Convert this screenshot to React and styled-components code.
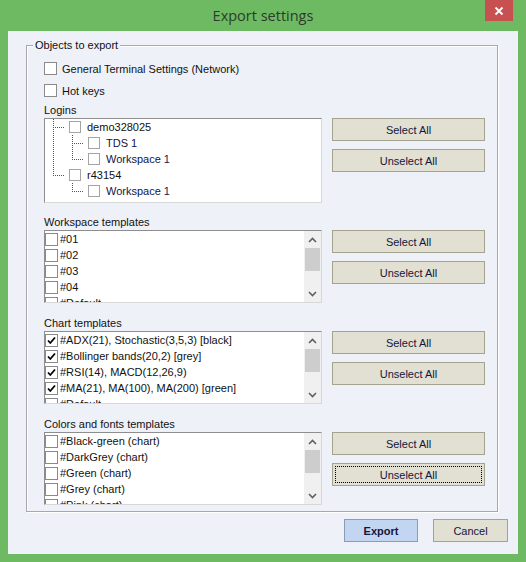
import React from 'react';
import styled, { createGlobalStyle } from 'styled-components';

const GlobalStyle = createGlobalStyle`
  html, body {
    margin: 0;
    padding: 0;
    background: #6dba62;
  }
  body {
    font-family: "Liberation Sans", Arial, sans-serif;
    font-size: 11px;
    color: #111;
  }
`;

const Window = styled.div`
  width: 526px;
  height: 562px;
  background: #6dba62;
  display: flex;
  flex-direction: column;
  box-sizing: border-box;
`;

const TitleBar = styled.div`
  height: 31px;
  position: relative;
  display: flex;
  align-items: center;
  justify-content: center;
`;

const Title = styled.div`
  font-family: "Open Sans", "Noto Sans", sans-serif;
  font-size: 14.5px;
  color: #2e3a2c;
  margin-top: -1px;
`;

const CloseButton = styled.div`
  position: absolute;
  top: 0;
  right: 13px;
  width: 28px;
  height: 21px;
  background: #c75050;
  display: flex;
  align-items: center;
  justify-content: center;
`;

const Client = styled.div`
  margin: 0 8px;
  height: 523px;
  background: #eff1f9;
  display: flex;
  flex-direction: column;
`;

const Group = styled.div`
  position: relative;
  margin: 14px 20px 0 18px;
  height: 467px;
  box-sizing: border-box;
  border: 1px solid #a8a8a8;
  box-shadow: inset 1px 1px 0 #fff, 1px 1px 0 #fff;
  padding: 15px 0 0 17px;
  display: flex;
  flex-direction: column;
`;

const Legend = styled.div`
  position: absolute;
  top: -8px;
  left: 6px;
  padding: 0 2px;
  background: #eff1f9;
  line-height: 14px;
`;

const CheckRow = styled.label`
  display: flex;
  align-items: center;
  height: 13px;
  margin-top: ${(p) => p.$top}px;
  gap: 5px;
`;

const Box = styled.span`
  width: ${(p) => p.$size}px;
  height: ${(p) => p.$size}px;
  box-sizing: border-box;
  border: 1px solid ${(p) => (p.$light ? '#a4a4a4' : '#8a8a8a')};
  background: #fff;
  flex-shrink: 0;
  display: flex;
  align-items: center;
  justify-content: center;
`;

const Section = styled.div`
  margin-top: ${(p) => p.$top}px;
  display: flex;
  flex-direction: column;
`;

const SectionLabel = styled.div`
  line-height: 14px;
  margin-bottom: 1px;
`;

const SectionBody = styled.div`
  display: flex;
  align-items: flex-start;
`;

const ListBox = styled.div`
  position: relative;
  width: 278px;
  height: ${(p) => p.$height}px;
  box-sizing: border-box;
  border: 1px solid #8e8e8e;
  border-right-color: #d8d8d8;
  border-bottom-color: #d8d8d8;
  background: #fff;
  overflow: hidden;
  display: flex;
`;

const Items = styled.div`
  flex: 1;
  display: flex;
  flex-direction: column;
`;

const Item = styled.div`
  height: 16px;
  flex-shrink: 0;
  display: flex;
  align-items: center;
  gap: 2px;
  white-space: nowrap;
`;

const ScrollBar = styled.div`
  width: 17px;
  background: #f0f0f0;
  display: flex;
  flex-direction: column;
  align-items: center;
`;

const Arrow = styled.div`
  height: 17px;
  display: flex;
  align-items: center;
  justify-content: center;
`;

const Thumb = styled.div`
  width: 15px;
  height: 23px;
  background: #cdcdcd;
`;

const Spacer = styled.div`
  flex: 1;
`;

const TreeRow = styled.div`
  height: 16px;
  flex-shrink: 0;
  display: flex;
  align-items: center;
  padding-left: ${(p) => 24 + p.$level * 19}px;
  gap: 6px;
  color: ${(p) => (p.$level ? '#14144a' : '#111')};
`;

const TreeLines = styled.svg`
  position: absolute;
  left: 0;
  top: 0;
`;

const Buttons = styled.div`
  margin-left: 10px;
  display: flex;
  flex-direction: column;
  gap: 8px;
`;

const Button = styled.div`
  width: ${(p) => p.$width || 153}px;
  height: 23px;
  box-sizing: border-box;
  border: 1px solid ${(p) => (p.$primary ? '#8d9bb4' : '#a4a38f')};
  background: ${(p) => (p.$primary ? '#c3d6f1' : '#e1e0d3')};
  font-weight: ${(p) => (p.$primary ? 'bold' : 'normal')};
  color: #15153a;
  display: flex;
  align-items: center;
  justify-content: center;
  outline: ${(p) => (p.$focus ? '1px dotted #000' : 'none')};
  outline-offset: -4px;
`;

const Footer = styled.div`
  display: flex;
  justify-content: flex-end;
  gap: 15px;
  padding: 7px 10px 0 0;
`;

function Check({ checked, size = 13, light }) {
  return (
    <Box $size={size} $light={light}>
      {checked && (
        <svg width="9" height="9" viewBox="0 0 9 9">
          <path d="M1 4.5 L3.3 7 L8 1.5" fill="none" stroke="#000" strokeWidth="1.8" />
        </svg>
      )}
    </Box>
  );
}

function Chevron({ up }) {
  return (
    <svg width="9" height="6" viewBox="0 0 9 6">
      <path
        d={up ? 'M1 5 L4.5 1.5 L8 5' : 'M1 1 L4.5 4.5 L8 1'}
        fill="none"
        stroke="#606060"
        strokeWidth="1.6"
      />
    </svg>
  );
}

function TemplateList({ items }) {
  return (
    <ListBox $height={73}>
      <Items>
        {items.map((it) => (
          <Item key={it.label}>
            <Check checked={it.checked} />
            {it.label}
          </Item>
        ))}
      </Items>
      <ScrollBar>
        <Arrow>
          <Chevron up />
        </Arrow>
        <Thumb />
        <Spacer />
        <Arrow>
          <Chevron />
        </Arrow>
      </ScrollBar>
    </ListBox>
  );
}

function SelectButtons({ focus }) {
  return (
    <Buttons>
      <Button>Select All</Button>
      <Button $focus={focus}>Unselect All</Button>
    </Buttons>
  );
}

const logins = [
  { label: 'demo328025', level: 0 },
  { label: 'TDS 1', level: 1 },
  { label: 'Workspace 1', level: 1 },
  { label: 'r43154', level: 0 },
  { label: 'Workspace 1', level: 1 },
];

const workspaces = ['#01', '#02', '#03', '#04', '#Default'].map((label) => ({ label }));

const charts = [
  '#ADX(21), Stochastic(3,5,3) [black]',
  '#Bollinger bands(20,2) [grey]',
  '#RSI(14), MACD(12,26,9)',
  '#MA(21), MA(100), MA(200) [green]',
  '#Default',
].map((label, i) => ({ label, checked: i < 4 }));

const colors = [
  '#Black-green (chart)',
  '#DarkGrey (chart)',
  '#Green (chart)',
  '#Grey (chart)',
  '#Pink (chart)',
].map((label) => ({ label }));

export default function App() {
  return (
    <>
      <GlobalStyle />
      <Window>
        <TitleBar>
          <Title>Export settings</Title>
          <CloseButton>
            <svg width="10" height="10" viewBox="0 0 10 10">
              <path d="M1.5 1.5 L8.5 8.5 M8.5 1.5 L1.5 8.5" stroke="#fff" strokeWidth="1.8" />
            </svg>
          </CloseButton>
        </TitleBar>
        <Client>
          <Group>
            <Legend>Objects to export</Legend>
            <CheckRow $top={1}>
              <Check />
              General Terminal Settings (Network)
            </CheckRow>
            <CheckRow $top={9}>
              <Check />
              Hot keys
            </CheckRow>

            <Section $top={6}>
              <SectionLabel>Logins</SectionLabel>
              <SectionBody>
                <ListBox $height={85}>
                  <TreeLines width="60" height="83">
                    <g stroke="#555" strokeWidth="1" strokeDasharray="1 1" fill="none">
                      <path d="M8.5 0 V56 M8 8.5 H20 M8 56.5 H20" />
                      <path d="M27.5 16 V40 M27 24.5 H39 M27 40.5 H39" />
                      <path d="M27.5 64 V72 M27 72.5 H39" />
                    </g>
                  </TreeLines>
                  <Items>
                    {logins.map((it, i) => (
                      <TreeRow key={i} $level={it.level}>
                        <Check size={12} light />
                        {it.label}
                      </TreeRow>
                    ))}
                  </Items>
                </ListBox>
                <SelectButtons />
              </SectionBody>
            </Section>

            <Section $top={12}>
              <SectionLabel>Workspace templates</SectionLabel>
              <SectionBody>
                <TemplateList items={workspaces} />
                <SelectButtons />
              </SectionBody>
            </Section>

            <Section $top={13}>
              <SectionLabel>Chart templates</SectionLabel>
              <SectionBody>
                <TemplateList items={charts} />
                <SelectButtons />
              </SectionBody>
            </Section>

            <Section $top={13}>
              <SectionLabel>Colors and fonts templates</SectionLabel>
              <SectionBody>
                <TemplateList items={colors} />
                <SelectButtons focus />
              </SectionBody>
            </Section>
          </Group>
          <Footer>
            <Button $primary $width={74}>Export</Button>
            <Button $width={75}>Cancel</Button>
          </Footer>
        </Client>
      </Window>
    </>
  );
}
